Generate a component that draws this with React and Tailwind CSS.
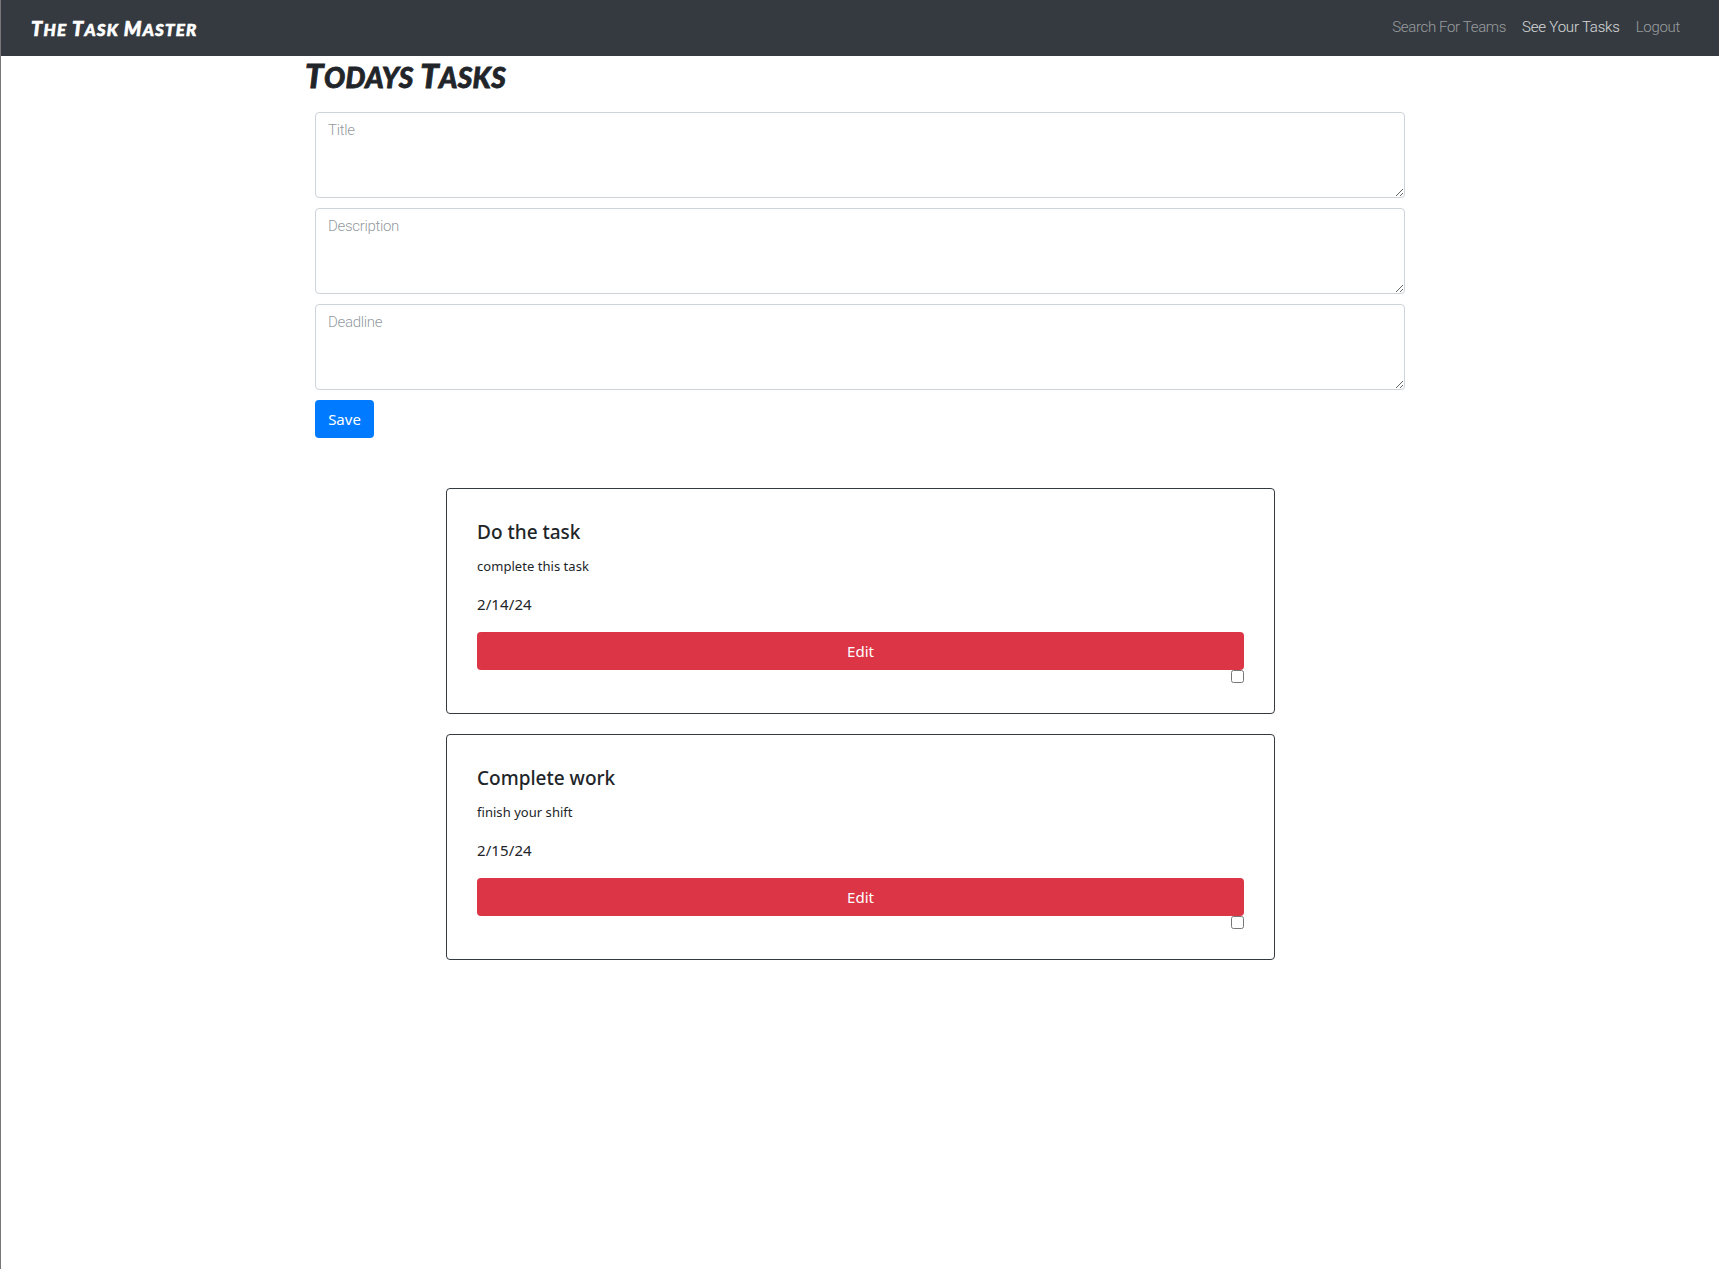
const tasks = [
  { title: "Do the task", description: "complete this task", deadline: "2/14/24" },
  { title: "Complete work", description: "finish your shift", deadline: "2/15/24" },
];

const fields = ["Title", "Description", "Deadline"];

function MarkerText({ text, wordClass }) {
  return text.split(" ").map((word, i) => (
    <span key={word}>
      {i > 0 && " "}
      <span className={`inline-block ${wordClass}`}>{word}</span>
    </span>
  ));
}

function NavBar() {
  return (
    <nav className="flex h-14 items-center justify-between bg-[#343a40] pr-[39px] pl-[30px]">
      <a href="#" className="pt-0.5 font-['Lato',sans-serif] text-[17px] leading-[30px] font-black tracking-[1.2px] whitespace-nowrap text-white uppercase italic [-webkit-text-stroke:0.6px]">
        <MarkerText text="The Task Master" wordClass="first-letter:text-[20px]" />
      </a>
      <div className="flex gap-4 pb-0.5 font-['Roboto',sans-serif] text-[15px] leading-6 font-light whitespace-nowrap">
        <a href="#" className="tracking-[-0.34px] text-white/50">Search For Teams</a>
        <a href="#" className="tracking-[-0.2px] text-white/80">See Your Tasks</a>
        <a href="#" className="tracking-[-0.3px] text-white/50">Logout</a>
      </div>
    </nav>
  );
}

function TaskForm() {
  return (
    <form className="ml-[314px] flex w-[1090px] flex-col items-start gap-[10px]">
      {fields.map((name) => (
        <textarea
          key={name}
          placeholder={name}
          className="block h-[86px] w-full resize-y rounded border border-[#ced4da] bg-white px-3 py-[5px] font-['Roboto',sans-serif] text-[15px] leading-6 font-light tracking-[-0.32px] placeholder:text-[#6c757d]/75"
        />
      ))}
      <button type="button" className="h-[38px] w-[59px] rounded bg-[#007bff] font-['Noto_Sans',sans-serif] text-[15px] leading-6 text-white">
        Save
      </button>
    </form>
  );
}

function TaskCard({ task }) {
  return (
    <article className="flex h-[226px] w-[829px] flex-col rounded border border-[#343a40] p-[30px] font-['Noto_Sans',sans-serif] text-[#212529]">
      <h5 className="mt-px mb-[9px] text-[19px] leading-6 font-medium">{task.title}</h5>
      <p className="mb-[14px] pt-px text-[13px] leading-6 tracking-[0.04px]">{task.description}</p>
      <p className="mb-4 text-[15px] leading-6 tracking-[0.1px]">{task.deadline}</p>
      <button type="button" className="h-[38px] w-full shrink-0 rounded bg-[#dc3545] text-[15px] leading-6 text-white">
        Edit
      </button>
      <input type="checkbox" className="m-0 block size-[13px] shrink-0 self-end" />
    </article>
  );
}

export default function App() {
  return (
    <div className="h-[1269px] overflow-hidden border-l border-[#777777] bg-white">
      <NavBar />
      <main>
        <h1 className="mb-2 ml-[304px] h-12 font-['Lato',sans-serif] text-[28px] leading-[39px] font-black tracking-[0.4px] whitespace-nowrap text-[#212529] uppercase italic [-webkit-text-stroke:0.8px]">
          <MarkerText text="Todays Tasks" wordClass="first-letter:text-[33px]" />
        </h1>
        <TaskForm />
        <section className="mt-[50px] ml-[445px] flex flex-col gap-5">
          {tasks.map((task) => (
            <TaskCard key={task.title} task={task} />
          ))}
        </section>
      </main>
    </div>
  );
}
